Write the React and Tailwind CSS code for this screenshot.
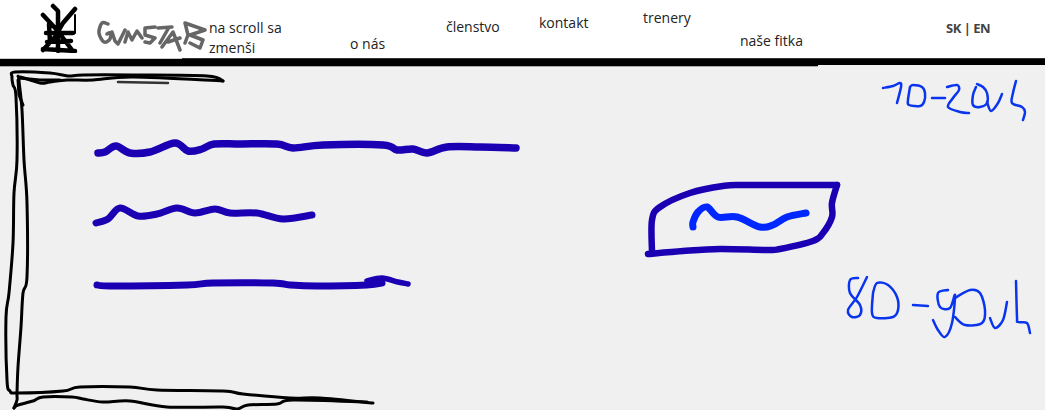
const smooth = (pts) => {
  let d = `M${pts[0][0]} ${pts[0][1]}`;
  for (let i = 0; i < pts.length - 1; i++) {
    const p0 = pts[Math.max(i - 1, 0)];
    const p1 = pts[i];
    const p2 = pts[i + 1];
    const p3 = pts[Math.min(i + 2, pts.length - 1)];
    const c1x = p1[0] + (p2[0] - p0[0]) / 6;
    const c1y = p1[1] + (p2[1] - p0[1]) / 6;
    const c2x = p2[0] - (p3[0] - p1[0]) / 6;
    const c2y = p2[1] - (p3[1] - p1[1]) / 6;
    d += ` C${c1x} ${c1y} ${c2x} ${c2y} ${p2[0]} ${p2[1]}`;
  }
  return d;
};

const Ink = ({ pts, w = 2, c = "#000" }) => (
  <path d={smooth(pts)} fill="none" stroke={c} strokeWidth={w} strokeLinecap="round" strokeLinejoin="round" />
);

const Line = ({ d, w, c = "#000" }) => (
  <path d={d} fill="none" stroke={c} strokeWidth={w} strokeLinecap="round" strokeLinejoin="round" />
);

const NavItem = ({ children, className }) => (
  <a className={`block text-sm leading-[20px] text-[#222] ${className}`}>{children}</a>
);

function Logo() {
  return (
    <svg width="50" height="50" viewBox="37 3 50 50" className="ml-[37px] mt-[3px] shrink-0">
      <Line w={4.5} d="M53 6 L58 11 L58 51 M43 15 L57 30 L72 50 M75 9 L63 23 L55 37 L43 50 M46 33 L73 33 M47 42 L71 41 M43 49 L75 51 M49 24 L50 42" />
      <Line w={2} d="M75 15 L75 33" />
    </svg>
  );
}

function Wordmark() {
  return (
    <svg width="110" height="40" viewBox="97 18 110 40" className="ml-[10px] mt-[18px] shrink-0">
      <Ink c="#666" w={3.5} pts={[[108,24],[102,23],[99,33],[104,42],[110,39],[110,33],[107,34]]} />
      <Line c="#666" w={3.5} d="M112 32 L115 41 L118 44 L125 30 M125 42 L128 32 L132 40 L137 31 L142 38 M155 27 L145 28 L145 35 L155 38 L150 43 L145 42 M158 28 L172 27 M168 29 L160 43 M162 47 L173 32 L180 50 M168 42 L180 38 M185 23 L205 30 L190 35 L203 40 L200 48 L190 43 M185 23 L188 35 L185 43" />
    </svg>
  );
}

function Sketch() {
  const black = 3;
  const blue = "#1b00b3";
  const pen = "#0a35ef";
  return (
    <svg width="1045" height="343" viewBox="0 67 1045 343" className="absolute left-0 top-0">
      <Ink w={black} pts={[[223,81],[207,76],[133,75],[83,75],[68,76],[50,73],[15,72],[12,77],[13,85],[16,97],[17,160],[14,193],[13,243],[9,293],[6,317],[7,380],[10,391],[17,393],[63,391],[80,387],[130,387],[157,390],[223,391],[243,394],[290,398],[320,398],[373,403]]} />
      <Ink w={black} pts={[[223,81],[133,77],[93,80],[67,80],[50,82],[40,83],[20,77],[19,80],[22,110],[24,160],[27,203],[27,277],[23,293],[21,327],[18,367],[17,393],[17,400],[14,408]]} />
      <Ink w={black} pts={[[14,408],[18,405],[33,401],[43,397],[72,397],[83,399],[103,402],[130,401],[167,407],[223,407],[237,409],[248,405],[277,404],[293,400],[367,402]]} />
      <Line w={black} d="M19 78 L40 80 L60 80 M18 80 L19 95 L23 105" />
      <Line w={2.5} c="#333" d="M118 82 L168 83" />

      <Ink c={blue} w={7.5} pts={[[98,153],[105,152],[116,146],[130,153],[150,152],[175,143],[188,151],[202,149],[214,144],[240,144],[277,144],[293,148],[323,145],[383,145],[397,150],[413,149],[427,153],[447,147],[480,147],[516,148]]} />
      <Ink c={blue} w={7} pts={[[96,223],[108,219],[120,208],[138,216],[157,214],[177,208],[195,213],[215,209],[230,213],[257,213],[283,219],[312,215]]} />
      <Ink c={blue} w={7} pts={[[97,285],[110,286],[187,285],[213,283],[273,283],[290,285],[317,286],[367,285],[382,283]]} />
      <Ink c={blue} w={5.5} pts={[[367,281],[382,278],[398,282],[408,284]]} />

      <Ink c={blue} w={6.5} pts={[[652,252],[652,220],[660,207],[690,193],[723,186],[747,185],[837,185]]} />
      <Ink c={blue} w={6.5} pts={[[837,185],[832,203],[832,217],[823,233],[813,241],[780,249],[767,250],[720,249],[683,251],[648,254]]} />
      <Ink c="#0027ff" w={7} pts={[[693,227],[693,222],[698,212],[707,207],[718,217],[737,217],[760,227],[773,225],[787,217],[806,213]]} />

      <Ink c={pen} w={2.5} pts={[[883,88],[893,86],[900,83],[901,87],[897,103]]} />
      <Ink c={pen} w={2.5} pts={[[910,87],[908,100],[909,105],[920,106],[924,102],[925,93],[922,87],[913,85],[910,87]]} />
      <Ink c={pen} w={2.5} pts={[[932,98],[945,98]]} />
      <Ink c={pen} w={2.5} pts={[[947,87],[957,85],[959,90],[953,98],[948,107],[960,112],[969,113]]} />
      <Ink c={pen} w={2.5} pts={[[976,87],[973,95],[973,105],[980,107],[987,103],[987,93],[983,87],[977,84]]} />
      <Ink c={pen} w={2.5} pts={[[987,102],[991,111],[998,103],[1002,94]]} />
      <Ink c={pen} w={2.5} pts={[[1016,81],[1013,93],[1012,103],[1022,107],[1025,112],[1023,120]]} />

      <Ink c={pen} w={2.5} pts={[[867,277],[857,297],[848,310],[852,317],[860,315],[860,305],[850,293],[850,280],[858,278]]} />
      <Ink c={pen} w={2.5} pts={[[873,293],[872,313],[877,318],[893,317],[898,310],[897,297],[888,285],[877,283],[873,293]]} />
      <Ink c={pen} w={2.5} pts={[[913,305],[928,306]]} />
      <Ink c={pen} w={2.5} pts={[[948,290],[938,293],[940,307],[950,308],[955,295],[952,323],[945,337],[938,330],[933,320]]} />
      <Ink c={pen} w={2.5} pts={[[955,298],[970,290],[980,293],[985,310],[982,323],[965,325],[955,317]]} />
      <Ink c={pen} w={2.5} pts={[[990,318],[995,328],[1003,320],[1007,302]]} />
      <Ink c={pen} w={2.5} pts={[[1016,281],[1017,317],[1018,322],[1027,323],[1030,333]]} />
    </svg>
  );
}

export default function App() {
  return (
    <div className="flex h-[410px] w-[1045px] flex-col overflow-hidden bg-white font-['Open_Sans','Noto_Sans',sans-serif]">
      <header className="flex h-[58px] shrink-0 items-start">
        <Logo />
        <Wordmark />
        <nav className="flex flex-1 items-start">
          <NavItem className="ml-[2px] mt-[18px] w-[141px]">
            na scroll sa
            <br />
            zmenši
          </NavItem>
          <NavItem className="mt-[34px] w-[96px]">o nás</NavItem>
          <NavItem className="mt-[17px] w-[93px]">členstvo</NavItem>
          <NavItem className="mt-[13px] w-[104px]">kontakt</NavItem>
          <NavItem className="mt-[8px] w-[97px]">trenery</NavItem>
          <NavItem className="mt-[31px] w-[206px]">naše fitka</NavItem>
          <span className="mt-[18px] text-[13px] leading-[20px] font-bold tracking-[-0.5px] text-[#444]">SK | EN</span>
        </nav>
      </header>
      <div className="flex h-px shrink-0">
        <div className="w-[182px] bg-[#ccc]" />
        <div className="flex-1 bg-[#333]" />
      </div>
      <div className="h-[6px] shrink-0 bg-black" />
      <div className="flex h-px shrink-0 bg-[#f0f0f0]">
        <div className="w-[818px] bg-black" />
      </div>
      <div className="flex h-px shrink-0 bg-[#f0f0f0]">
        <div className="w-[818px] bg-[#aaa]" />
      </div>
      <main className="relative flex-1 bg-[#f0f0f0]">
        <Sketch />
      </main>
    </div>
  );
}
